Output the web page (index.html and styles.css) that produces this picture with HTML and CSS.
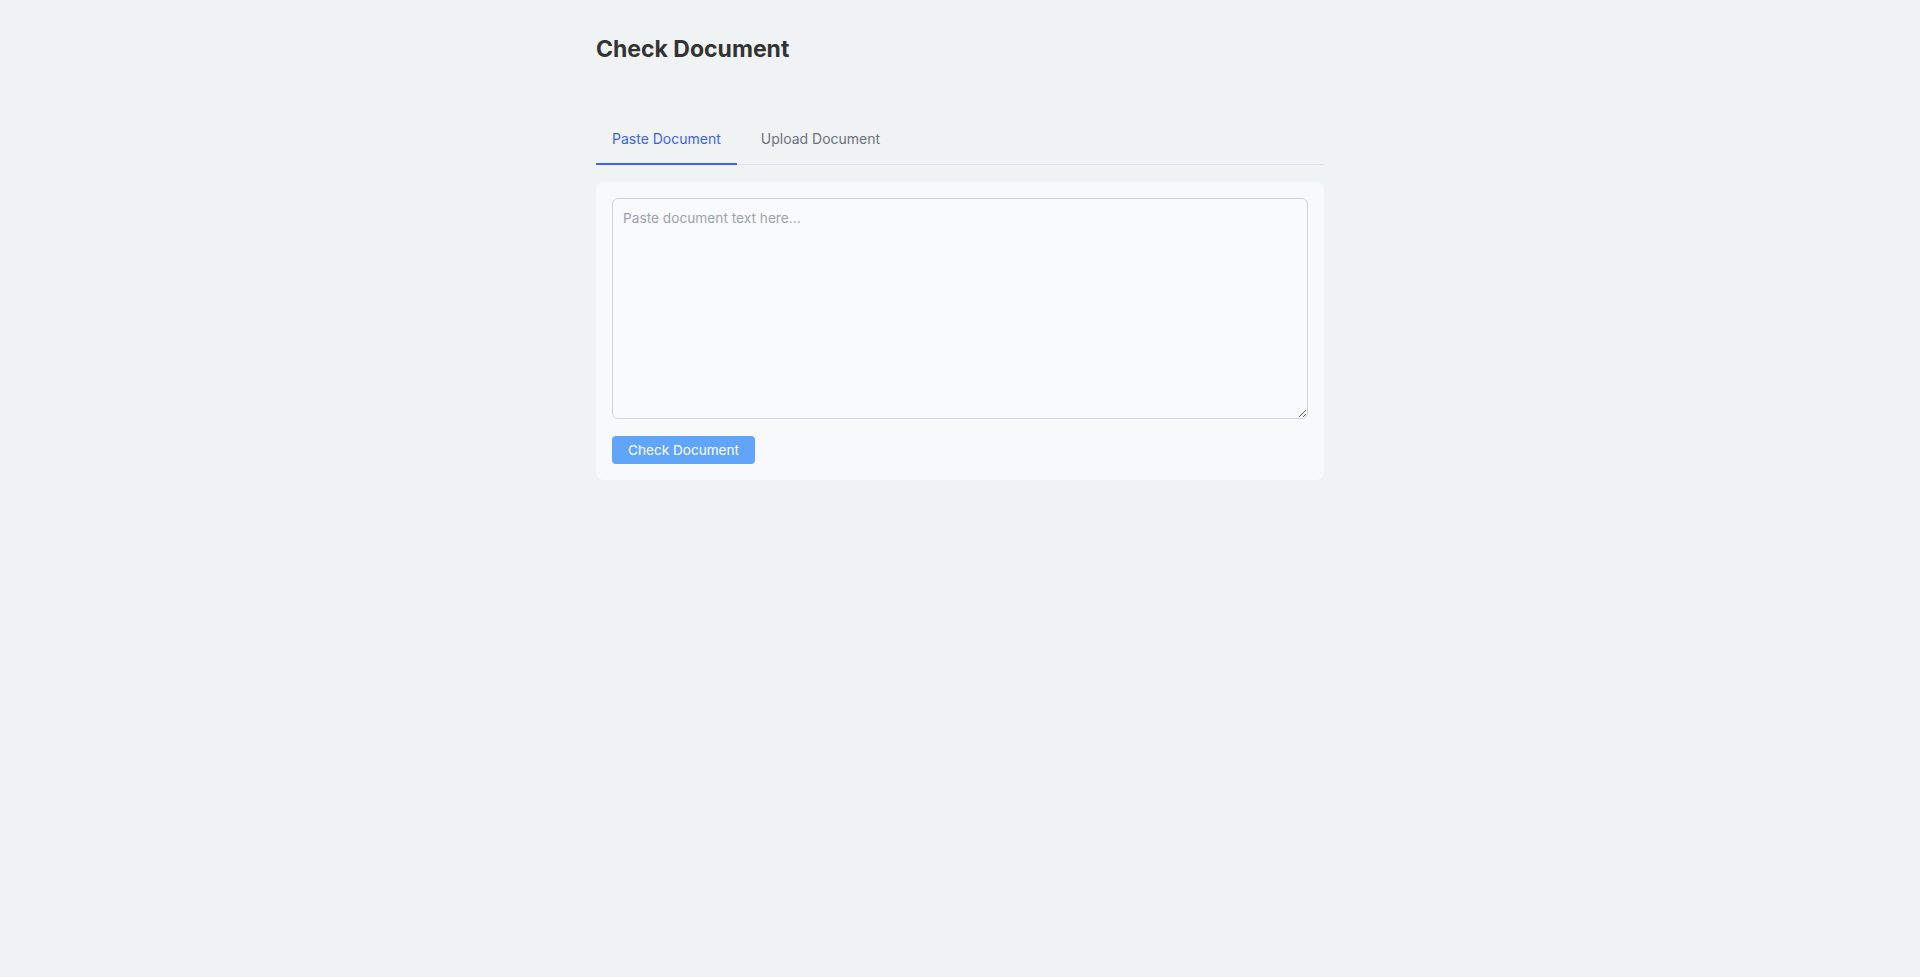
FILE: index.html
```html
<!DOCTYPE html>
<html lang="en">
<head>
<meta charset="utf-8">
<title>Check Document</title>
<link rel="stylesheet" href="styles.css">
</head>
<body>
<main class="container">
  <h1 class="title">Check Document</h1>
  <nav class="tabs">
    <button class="tab tab-active" type="button">Paste Document</button>
    <button class="tab" type="button">Upload Document</button>
  </nav>
  <section class="card">
    <textarea class="doc-input" placeholder="Paste document text here..."></textarea>
    <div class="actions">
      <button class="btn-primary" type="button">Check Document</button>
    </div>
  </section>
</main>
</body>
</html>
```
FILE: styles.css
```css
html, body {
  margin: 0;
  padding: 0;
}
body {
  background: #f0f3f4;
  font-family: Inter, "Noto Sans", "Liberation Sans", sans-serif;
  color: #333;
}
.container {
  max-width: 728px;
  margin: 0 auto;
  padding-top: 35px;
}
.title {
  margin: 0;
  font-size: 23px;
  font-weight: 700;
  line-height: normal;
  color: #333333;
}
.tabs {
  margin-top: 51px;
  display: flex;
  gap: 8px;
  border-bottom: 1px solid #e2e5e8;
}
.tab {
  font-family: inherit;
  font-size: 14px;
  line-height: normal;
  padding: 16px;
  margin: 0 0 -1px 0;
  background: none;
  border: none;
  border-bottom: 2px solid transparent;
  color: #6b7280;
  cursor: pointer;
}
.tab-active {
  color: #3b63ef;
  border-bottom-color: #3b63ef;
}
.card {
  margin-top: 17px;
  background: #f8f9fb;
  border-radius: 8px;
  padding: 16px;
}
.doc-input {
  display: block;
  box-sizing: border-box;
  width: 100%;
  height: 221px;
  padding: 9px 10px;
  border: 1px solid #d1d5db;
  border-radius: 6px;
  background: #f9fafb;
  font-family: inherit;
  font-size: 13.7px;
  line-height: 1.5;
  color: #333;
  outline: none;
}
.doc-input::placeholder {
  color: #9ca3af;
}
.actions {
  margin-top: 17px;
  display: flex;
}
.btn-primary {
  height: 28px;
  padding: 0 16px;
  border: none;
  border-radius: 4px;
  background: #60a5fa;
  color: #ffffff;
  font-family: inherit;
  font-size: 13.6px;
  line-height: 28px;
  cursor: pointer;
}
```
